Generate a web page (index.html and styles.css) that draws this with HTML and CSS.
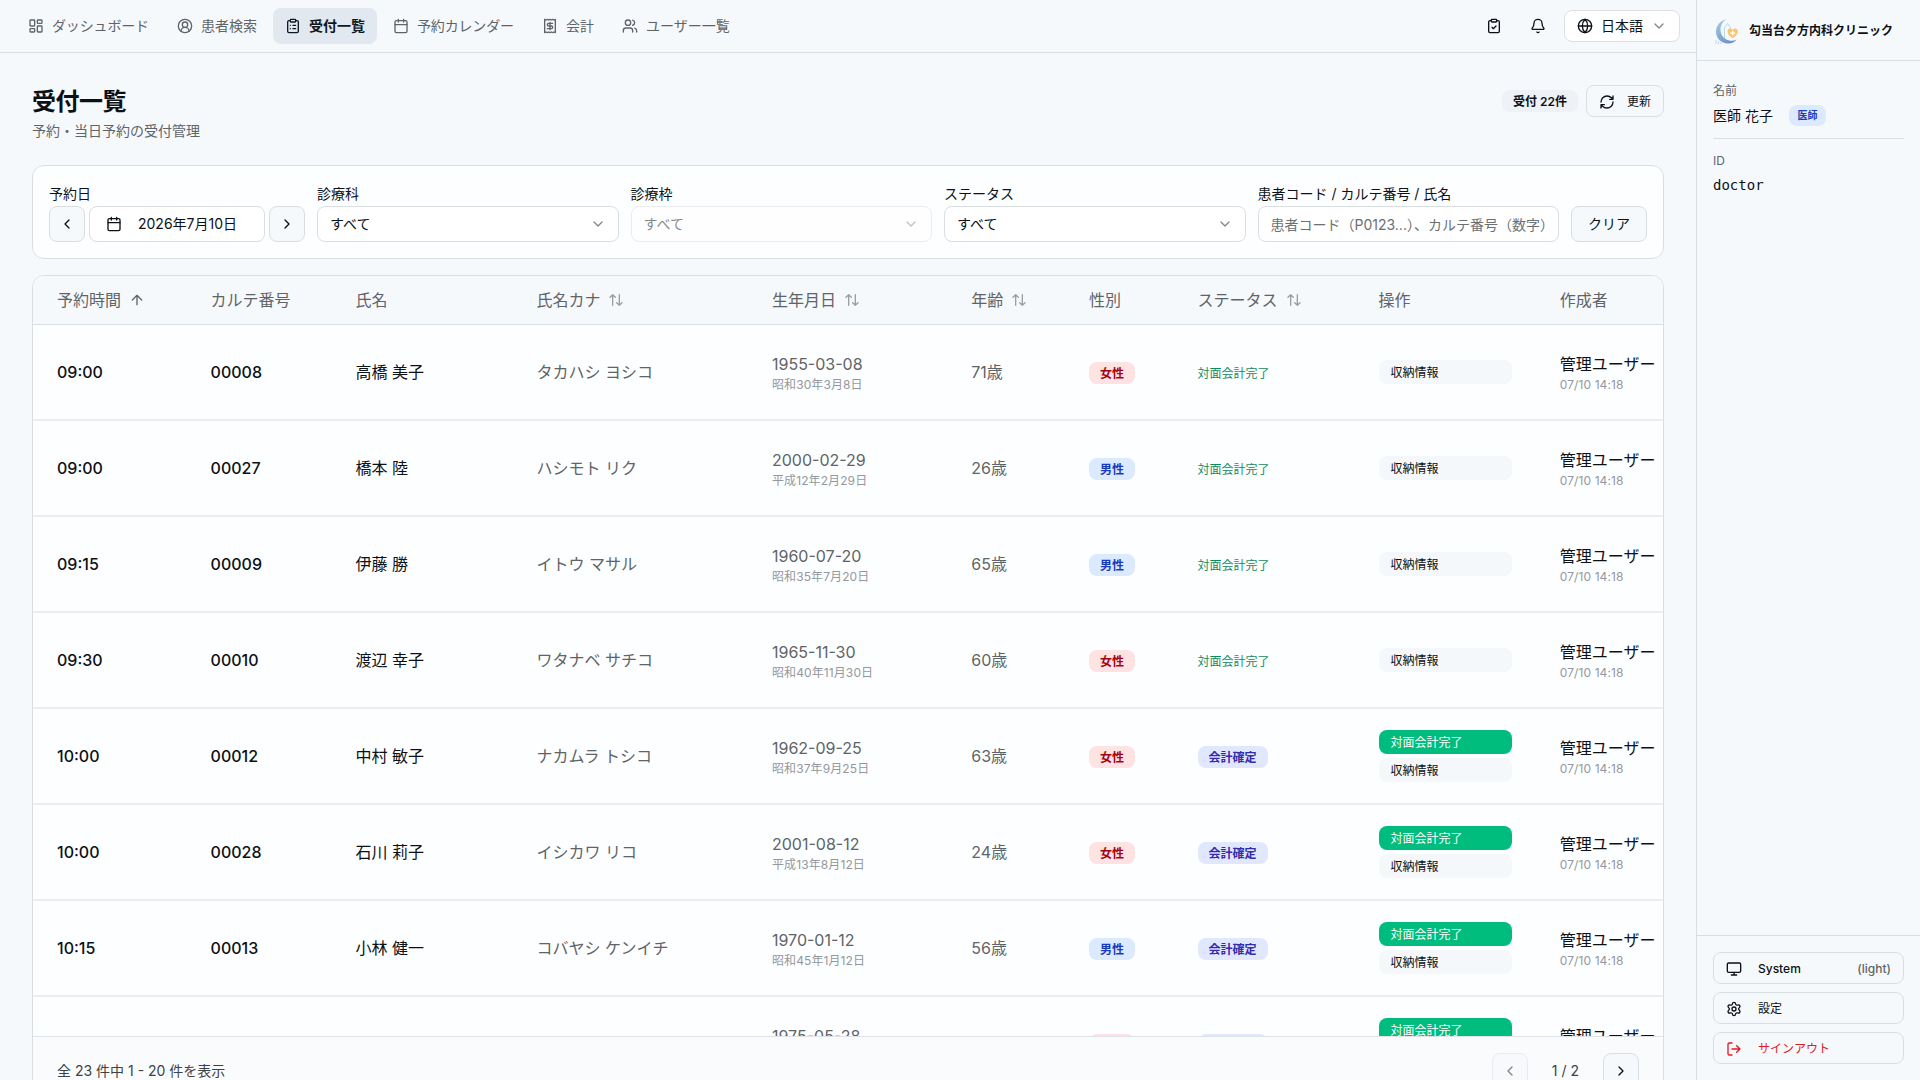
FILE: index.html
```html
<!DOCTYPE html>
<html lang="ja">
<head>
  <meta charset="UTF-8">
  <meta name="viewport" content="width=device-width, initial-scale=1">
  <title>受付一覧</title>
  <link rel="stylesheet" href="styles.css">
</head>
<body>

  <!-- Shared icons -->
  <svg class="icon-defs" width="0" height="0">
    <symbol id="i-dashboard" viewBox="0 0 24 24"><rect x="3" y="3" width="7" height="9" rx="1"/><rect x="14" y="3" width="7" height="5" rx="1"/><rect x="14" y="12" width="7" height="9" rx="1"/><rect x="3" y="16" width="7" height="5" rx="1"/></symbol>
    <symbol id="i-user" viewBox="0 0 24 24"><path d="M18 20a6 6 0 0 0-12 0"/><circle cx="12" cy="10" r="4"/><circle cx="12" cy="12" r="10"/></symbol>
    <symbol id="i-clipboard-list" viewBox="0 0 24 24"><rect x="8" y="2" width="8" height="4" rx="1"/><path d="M16 4h2a2 2 0 0 1 2 2v14a2 2 0 0 1-2 2H6a2 2 0 0 1-2-2V6a2 2 0 0 1 2-2h2M12 11h4M12 16h4M8 11h.01M8 16h.01"/></symbol>
    <symbol id="i-clipboard-check" viewBox="0 0 24 24"><rect x="8" y="2" width="8" height="4" rx="1"/><path d="M16 4h2a2 2 0 0 1 2 2v14a2 2 0 0 1-2 2H6a2 2 0 0 1-2-2V6a2 2 0 0 1 2-2h2M9 14l2 2 4-4"/></symbol>
    <symbol id="i-calendar" viewBox="0 0 24 24"><path d="M8 2v4M16 2v4M3 10h18"/><rect x="3" y="4" width="18" height="18" rx="2"/></symbol>
    <symbol id="i-receipt" viewBox="0 0 24 24"><path d="M4 2v20l2-1 2 1 2-1 2 1 2-1 2 1 2-1 2 1V2l-2 1-2-1-2 1-2-1-2 1-2-1-2 1Z"/><path d="M16 8h-6a2 2 0 1 0 0 4h4a2 2 0 1 1 0 4H8M12 17.5v-11"/></symbol>
    <symbol id="i-users" viewBox="0 0 24 24"><path d="M16 21v-2a4 4 0 0 0-4-4H6a4 4 0 0 0-4 4v2M22 21v-2a4 4 0 0 0-3-3.87M16 3.13a4 4 0 0 1 0 7.75"/><circle cx="9" cy="7" r="4"/></symbol>
    <symbol id="i-bell" viewBox="0 0 24 24"><path d="M10.27 21a2 2 0 0 0 3.46 0M3.26 15.33A1 1 0 0 0 4 17h16a1 1 0 0 0 .74-1.67C19.41 13.96 18 12.5 18 8A6 6 0 0 0 6 8c0 4.5-1.41 5.96-2.74 7.33"/></symbol>
    <symbol id="i-globe" viewBox="0 0 24 24"><circle cx="12" cy="12" r="10"/><path d="M12 2a14.5 14.5 0 0 0 0 20 14.5 14.5 0 0 0 0-20M2 12h20"/></symbol>
    <symbol id="i-down" viewBox="0 0 24 24"><path d="m6 9 6 6 6-6"/></symbol>
    <symbol id="i-left" viewBox="0 0 24 24"><path d="m15 18-6-6 6-6"/></symbol>
    <symbol id="i-right" viewBox="0 0 24 24"><path d="m9 18 6-6-6-6"/></symbol>
    <symbol id="i-refresh" viewBox="0 0 24 24"><path d="M3 12a9 9 0 0 1 9-9 9.75 9.75 0 0 1 6.74 2.74L21 8M21 3v5h-5M21 12a9 9 0 0 1-9 9 9.75 9.75 0 0 1-6.74-2.74L3 16M8 16H3v5"/></symbol>
    <symbol id="i-up" viewBox="0 0 24 24"><path d="m5 12 7-7 7 7M12 19V5"/></symbol>
    <symbol id="i-sort" viewBox="0 0 24 24"><path d="m21 16-4 4-4-4M17 20V4M3 8l4-4 4 4M7 4v16"/></symbol>
    <symbol id="i-monitor" viewBox="0 0 24 24"><rect x="2" y="3" width="20" height="14" rx="2"/><path d="M8 21h8M12 17v4"/></symbol>
    <symbol id="i-settings" viewBox="0 0 24 24"><path d="M9.671 4.136a2.34 2.34 0 0 1 4.659 0 2.34 2.34 0 0 0 3.319 1.915 2.34 2.34 0 0 1 2.33 4.033 2.34 2.34 0 0 0 0 3.831 2.34 2.34 0 0 1-2.33 4.033 2.34 2.34 0 0 0-3.319 1.915 2.34 2.34 0 0 1-4.659 0 2.34 2.34 0 0 0-3.32-1.915 2.34 2.34 0 0 1-2.33-4.033 2.34 2.34 0 0 0 0-3.831A2.34 2.34 0 0 1 6.35 6.051a2.34 2.34 0 0 0 3.319-1.915"/><circle cx="12" cy="12" r="3"/></symbol>
    <symbol id="i-logout" viewBox="0 0 24 24"><path d="M9 21H5a2 2 0 0 1-2-2V5a2 2 0 0 1 2-2h4M16 17l5-5-5-5M21 12H9"/></symbol>
  </svg>

  <div class="app">
    <div class="content">
      <header class="topbar">
        <nav class="nav">
          <a class="nav-item kana"><svg class="icon"><use href="#i-dashboard"/></svg>ダッシュボード</a>
          <a class="nav-item"><svg class="icon"><use href="#i-user"/></svg>患者検索</a>
          <a class="nav-item active"><svg class="icon"><use href="#i-clipboard-list"/></svg>受付一覧</a>
          <a class="nav-item kana"><svg class="icon"><use href="#i-calendar"/></svg>予約カレンダー</a>
          <a class="nav-item"><svg class="icon"><use href="#i-receipt"/></svg>会計</a>
          <a class="nav-item"><svg class="icon"><use href="#i-users"/></svg>ユーザー一覧</a>
        </nav>
        <div class="tools">
          <button class="icon-button"><svg class="icon"><use href="#i-clipboard-check"/></svg></button>
          <button class="icon-button"><svg class="icon"><use href="#i-bell"/></svg></button>
          <button class="language"><svg class="icon"><use href="#i-globe"/></svg><span>日本語</span><svg class="icon chevron"><use href="#i-down"/></svg></button>
        </div>
      </header>

      <main class="main">
        <div class="page-head">
          <div>
            <h1>受付一覧</h1>
            <p class="subtitle">予約・当日予約の受付管理</p>
          </div>
          <div class="page-actions">
            <span class="count">受付 22件</span>
            <button class="refresh"><svg class="icon"><use href="#i-refresh"/></svg>更新</button>
          </div>
        </div>

        <section class="filters">
          <div class="field field-date">
            <label>予約日</label>
            <div class="date-row">
              <button class="control square"><svg class="icon"><use href="#i-left"/></svg></button>
              <button class="control date"><svg class="icon"><use href="#i-calendar"/></svg>2026年7月10日</button>
              <button class="control square"><svg class="icon"><use href="#i-right"/></svg></button>
            </div>
          </div>
          <div class="field">
            <label>診療科</label>
            <div class="control select"><span>すべて</span><svg class="icon chevron"><use href="#i-down"/></svg></div>
          </div>
          <div class="field">
            <label>診療枠</label>
            <div class="control select disabled"><span>すべて</span><svg class="icon chevron"><use href="#i-down"/></svg></div>
          </div>
          <div class="field">
            <label>ステータス</label>
            <div class="control select"><span>すべて</span><svg class="icon chevron"><use href="#i-down"/></svg></div>
          </div>
          <div class="field">
            <label>患者コード / カルテ番号 / 氏名</label>
            <input class="control search" type="text" placeholder="患者コード（P0123...）、カルテ番号（数字）">
          </div>
          <button class="control clear">クリア</button>
        </section>

        <section class="list">
          <div class="table-wrap">
            <table>
              <colgroup>
                <col class="c-time"><col class="c-chart"><col class="c-name"><col class="c-kana"><col class="c-birth">
                <col class="c-age"><col class="c-sex"><col class="c-status"><col class="c-action"><col class="c-author">
              </colgroup>
              <thead>
                <tr>
                  <th><span class="th">予約時間<svg class="icon"><use href="#i-up"/></svg></span></th>
                  <th>カルテ番号</th>
                  <th>氏名</th>
                  <th><span class="th">氏名カナ<svg class="icon sort"><use href="#i-sort"/></svg></span></th>
                  <th><span class="th">生年月日<svg class="icon sort"><use href="#i-sort"/></svg></span></th>
                  <th><span class="th">年齢<svg class="icon sort"><use href="#i-sort"/></svg></span></th>
                  <th>性別</th>
                  <th><span class="th">ステータス<svg class="icon sort"><use href="#i-sort"/></svg></span></th>
                  <th>操作</th>
                  <th>作成者</th>
                </tr>
              </thead>
              <tbody>
                <tr>
                  <td class="strong">09:00</td>
                  <td class="strong">00008</td>
                  <td class="name">高橋 美子</td>
                  <td>タカハシ ヨシコ</td>
                  <td>1955-03-08<small>昭和30年3月8日</small></td>
                  <td>71歳</td>
                  <td><span class="badge female">女性</span></td>
                  <td><span class="done">対面会計完了</span></td>
                  <td><div class="actions"><button>収納情報</button></div></td>
                  <td class="author">管理ユーザー<small>07/10 14:18</small></td>
                </tr>
                <tr>
                  <td class="strong">09:00</td>
                  <td class="strong">00027</td>
                  <td class="name">橋本 陸</td>
                  <td>ハシモト リク</td>
                  <td>2000-02-29<small>平成12年2月29日</small></td>
                  <td>26歳</td>
                  <td><span class="badge male">男性</span></td>
                  <td><span class="done">対面会計完了</span></td>
                  <td><div class="actions"><button>収納情報</button></div></td>
                  <td class="author">管理ユーザー<small>07/10 14:18</small></td>
                </tr>
                <tr>
                  <td class="strong">09:15</td>
                  <td class="strong">00009</td>
                  <td class="name">伊藤 勝</td>
                  <td>イトウ マサル</td>
                  <td>1960-07-20<small>昭和35年7月20日</small></td>
                  <td>65歳</td>
                  <td><span class="badge male">男性</span></td>
                  <td><span class="done">対面会計完了</span></td>
                  <td><div class="actions"><button>収納情報</button></div></td>
                  <td class="author">管理ユーザー<small>07/10 14:18</small></td>
                </tr>
                <tr>
                  <td class="strong">09:30</td>
                  <td class="strong">00010</td>
                  <td class="name">渡辺 幸子</td>
                  <td>ワタナベ サチコ</td>
                  <td>1965-11-30<small>昭和40年11月30日</small></td>
                  <td>60歳</td>
                  <td><span class="badge female">女性</span></td>
                  <td><span class="done">対面会計完了</span></td>
                  <td><div class="actions"><button>収納情報</button></div></td>
                  <td class="author">管理ユーザー<small>07/10 14:18</small></td>
                </tr>
                <tr>
                  <td class="strong">10:00</td>
                  <td class="strong">00012</td>
                  <td class="name">中村 敏子</td>
                  <td>ナカムラ トシコ</td>
                  <td>1962-09-25<small>昭和37年9月25日</small></td>
                  <td>63歳</td>
                  <td><span class="badge female">女性</span></td>
                  <td><span class="badge fixed">会計確定</span></td>
                  <td><div class="actions"><button class="primary">対面会計完了</button><button>収納情報</button></div></td>
                  <td class="author">管理ユーザー<small>07/10 14:18</small></td>
                </tr>
                <tr>
                  <td class="strong">10:00</td>
                  <td class="strong">00028</td>
                  <td class="name">石川 莉子</td>
                  <td>イシカワ リコ</td>
                  <td>2001-08-12<small>平成13年8月12日</small></td>
                  <td>24歳</td>
                  <td><span class="badge female">女性</span></td>
                  <td><span class="badge fixed">会計確定</span></td>
                  <td><div class="actions"><button class="primary">対面会計完了</button><button>収納情報</button></div></td>
                  <td class="author">管理ユーザー<small>07/10 14:18</small></td>
                </tr>
                <tr>
                  <td class="strong">10:15</td>
                  <td class="strong">00013</td>
                  <td class="name">小林 健一</td>
                  <td>コバヤシ ケンイチ</td>
                  <td>1970-01-12<small>昭和45年1月12日</small></td>
                  <td>56歳</td>
                  <td><span class="badge male">男性</span></td>
                  <td><span class="badge fixed">会計確定</span></td>
                  <td><div class="actions"><button class="primary">対面会計完了</button><button>収納情報</button></div></td>
                  <td class="author">管理ユーザー<small>07/10 14:18</small></td>
                </tr>
                <tr>
                  <td></td>
                  <td></td>
                  <td></td>
                  <td></td>
                  <td>1975-05-28<small>昭和50年5月28日</small></td>
                  <td></td>
                  <td><span class="badge female">女性</span></td>
                  <td><span class="badge fixed">会計確定</span></td>
                  <td><div class="actions"><button class="primary">対面会計完了</button><button>収納情報</button></div></td>
                  <td class="author">管理ユーザー<small>07/10 14:18</small></td>
                </tr>
              </tbody>
            </table>
          </div>
          <footer class="pager">
            <span>全 23 件中 1 - 20 件を表示</span>
            <div class="pager-nav">
              <button class="control square disabled"><svg class="icon"><use href="#i-left"/></svg></button>
              <span>1 / 2</span>
              <button class="control square"><svg class="icon"><use href="#i-right"/></svg></button>
            </div>
          </footer>
        </section>
      </main>
    </div>

    <aside class="sidebar">
      <div class="clinic">
        <svg class="logo" viewBox="0 0 28 28">
          <defs>
            <linearGradient id="moon" x1="0" y1="0" x2="0.6" y2="1">
              <stop offset="0" stop-color="#a9cdea"/>
              <stop offset="1" stop-color="#6d93cb"/>
            </linearGradient>
          </defs>
          <path class="logo-house" d="M11.5 23V10.5L14.5 6.5l3 4V14M3 23v4M5.5 24.5V27M8 25v2"/>
          <path fill="url(#moon)" d="M14 2C7.5 3.5 3 8.5 3 14.5 3 21.5 8.5 26.5 15 26.5c4 0 7-1.500 8.500-4-2 1.200-4 1.500-6 1.200C11.500 23 7.500 18.500 7.500 12.500 7.500 8 10 4 14 2Z"/>
          <path class="logo-heart" d="M19.700 21.200c-3.500-2.500-5.200-4.500-5.200-6.700 0-3.300 3.900-3.900 5.200-1.400 1.300-2.500 5.200-1.900 5.200 1.400 0 2.200-1.700 4.200-5.200 6.700Z"/>
          <path class="logo-cross" d="M19.700 13.800v4.800M17.300 16.200h4.800"/>
        </svg>
        <span>勾当台夕方内科クリニック</span>
      </div>
      <div class="profile">
        <div class="profile-name">
          <div class="caption">名前</div>
          <div class="person"><span>医師 花子</span><span class="role">医師</span></div>
        </div>
        <div class="profile-id">
          <div class="caption">ID</div>
          <div class="login">doctor</div>
        </div>
      </div>
      <div class="side-buttons">
        <button class="theme"><svg class="icon"><use href="#i-monitor"/></svg>System<span class="mode">(light)</span></button>
        <button><svg class="icon"><use href="#i-settings"/></svg>設定</button>
        <button class="signout"><svg class="icon"><use href="#i-logout"/></svg>サインアウト</button>
      </div>
    </aside>
  </div>

</body>
</html>
```
FILE: styles.css
```css
* {
  box-sizing: border-box;
}

body {
  margin: 0;
  font-family: Inter, "Noto Sans CJK JP", sans-serif;
  font-size: 14px;
  line-height: 20px;
  color: #0c1116;
  background: #f6f9fc;
  height: 100vh;
  overflow: hidden;
}

button,
input {
  font: inherit;
  color: inherit;
  margin: 0;
}

button {
  background: none;
  border: none;
  padding: 0;
  white-space: nowrap;
}

.icon-defs {
  display: none;
}

.icon {
  width: 16px;
  height: 16px;
  flex: none;
  fill: none;
  stroke: currentColor;
  stroke-width: 2;
  stroke-linecap: round;
  stroke-linejoin: round;
}

.chevron {
  opacity: 0.5;
}

.app {
  display: flex;
  height: 100vh;
}

.content {
  flex: 1;
  min-width: 0;
  display: flex;
  flex-direction: column;
}

/* Top bar */
.topbar {
  flex: none;
  height: 53px;
  padding: 0 16px;
  border-bottom: 1px solid #d9dee3;
  display: flex;
  align-items: center;
  justify-content: space-between;
}

.nav {
  display: flex;
  gap: 4px;
}

.nav-item {
  display: flex;
  align-items: center;
  gap: 8px;
  height: 36px;
  padding: 0 12px;
  border-radius: 8px;
  color: #5f6468;
}

.nav-item.kana {
  letter-spacing: -0.15px;
}

.nav-item.active {
  background: #e2e8f0;
  color: #0f1720;
  font-weight: 600;
}

.tools {
  display: flex;
  align-items: center;
  gap: 8px;
}

.icon-button {
  width: 36px;
  height: 36px;
  display: flex;
  align-items: center;
  justify-content: center;
}

.language {
  display: flex;
  align-items: center;
  gap: 8px;
  width: 116px;
  height: 32px;
  padding: 0 12px;
  border: 1px solid #dce0e4;
  border-radius: 8px;
  background: #fff;
}

.language .chevron {
  margin-left: auto;
}

/* Page heading */
.main {
  flex: 1;
  padding: 32px 32px 0;
}

.page-head {
  display: flex;
  justify-content: space-between;
  height: 80px;
}

h1 {
  margin: 0;
  padding-top: 1px;
  font-size: 24px;
  line-height: 32px;
  font-weight: 700;
  letter-spacing: -0.5px;
}

.subtitle {
  margin: 3px 0 0;
  color: #5f6468;
}

.page-actions {
  display: flex;
  align-items: center;
  gap: 8px;
  height: 32px;
}

.count {
  height: 22px;
  padding: 1px 11px 0;
  border-radius: 8px;
  background: #eef2f6;
  font-size: 12px;
  line-height: 21px;
  font-weight: 600;
}

.refresh {
  display: flex;
  align-items: center;
  gap: 12px;
  width: 78px;
  height: 32px;
  padding: 1px 12px 0;
  border: 1px solid #d9dee3;
  border-radius: 8px;
  font-size: 12px;
}

/* Filters */
.filters {
  display: flex;
  align-items: flex-end;
  gap: 12px;
  height: 94px;
  padding: 16px;
  border: 1px solid #d9dee3;
  border-radius: 12px;
  background: #fdfeff;
}

.field {
  flex: 1 1 0;
  min-width: 0;
}

.field-date {
  flex: none;
}

.field label {
  display: block;
  line-height: 24px;
}

.date-row {
  display: flex;
  gap: 4px;
}

.control {
  display: flex;
  align-items: center;
  height: 36px;
  border: 1px solid #d9dee3;
  border-radius: 8px;
  background: #fff;
}

.square {
  justify-content: center;
  width: 36px;
  background: #f6f9fc;
}

.date {
  width: 176px;
  padding-left: 16px;
  gap: 16px;
}

.select {
  justify-content: space-between;
  padding: 0 12px;
}

.disabled {
  opacity: 0.5;
}

.search {
  width: 100%;
  padding: 0 12px;
}

.search::placeholder {
  color: #6b7075;
  opacity: 1;
}

.clear {
  justify-content: center;
  width: 76px;
  background: #f6f9fc;
}

/* Reception table */
.list {
  margin-top: 16px;
  border: 1px solid #d9dee3;
  border-radius: 12px;
  background: #fdfeff;
  overflow: hidden;
}

.table-wrap {
  height: 760px;
  overflow: hidden;
}

table {
  width: 1683px;
  table-layout: fixed;
  border-collapse: separate;
  border-spacing: 0;
  font-size: 16px;
  line-height: 24px;
}

.c-time { width: 153.600px; }
.c-chart { width: 144.800px; }
.c-name { width: 181px; }
.c-kana { width: 235.600px; }
.c-birth { width: 199.300px; }
.c-age { width: 117.700px; }
.c-sex { width: 108.600px; }
.c-status { width: 181px; }
.c-action { width: 181.200px; }

th {
  height: 49px;
  padding: 0 0 0 24px;
  border-bottom: 1px solid #d9dee3;
  background: #f6f9fc;
  color: #5f6468;
  font-weight: 400;
  text-align: left;
  white-space: nowrap;
}

.th {
  display: flex;
  align-items: center;
  gap: 8px;
}

.sort {
  opacity: 0.6;
}

td {
  height: 96px;
  padding: 0 24px;
  border-bottom: 2px solid #ebedf0;
  color: #5f6468;
  white-space: nowrap;
}

td small {
  display: block;
  padding-top: 1px;
  font-size: 12px;
  line-height: 15px;
  letter-spacing: 0.1px;
  color: #94989c;
}

.strong {
  color: #0c1116;
  font-weight: 500;
}

.name,
.author {
  color: #0c1116;
}

.badge {
  display: inline-block;
  height: 22px;
  padding: 1px 11px 0;
  border-radius: 8px;
  font-size: 12px;
  line-height: 21px;
  font-weight: 600;
  vertical-align: middle;
}

.female {
  background: #ffe2e2;
  color: #9f0712;
}

.male {
  background: #dbeafe;
  color: #193cb8;
}

.fixed {
  background: #e0e7ff;
  color: #372aac;
}

.done {
  display: block;
  padding-top: 3px;
  font-size: 12px;
  color: #138a5e;
}

.actions {
  display: flex;
  flex-direction: column;
  gap: 4px;
}

.actions button {
  height: 24px;
  padding: 1px 12px 0;
  border-radius: 8px;
  background: #f5f8fa;
  color: #0c1116;
  font-size: 12px;
  line-height: 23px;
  text-align: left;
}

.actions .primary {
  background: #00bc7d;
  color: #fff;
}

.pager {
  display: flex;
  align-items: center;
  justify-content: space-between;
  height: 69px;
  padding: 0 24px;
  border-top: 1px solid #dfe2e6;
  background: #fafbfd;
  color: #3d4247;
}

.pager-nav {
  display: flex;
  align-items: center;
  gap: 24px;
}

.pager .square {
  color: #0c1116;
}

/* Sidebar */
.sidebar {
  flex: none;
  width: 224px;
  display: flex;
  flex-direction: column;
  border-left: 1px solid #d9dee3;
}

.clinic {
  display: flex;
  align-items: center;
  gap: 8px;
  height: 61px;
  padding: 1px 16px 0;
  border-bottom: 1px solid #d9dee3;
  font-size: 12px;
  font-weight: 600;
  white-space: nowrap;
}

.logo {
  width: 28px;
  height: 28px;
  flex: none;
}

.logo-house {
  fill: none;
  stroke: #b9d2e8;
  stroke-width: 0.9;
}

.logo-heart {
  fill: #f9c370;
}

.logo-cross {
  stroke: #fff;
  stroke-width: 1.5;
}

.profile {
  flex: 1;
  padding: 21px 16px 0;
}

.caption {
  font-size: 12px;
  line-height: 18px;
  color: #5f6468;
}

.profile-name {
  height: 57px;
  border-bottom: 1px solid #d9dee3;
}

.person {
  display: flex;
  align-items: center;
  gap: 16px;
  height: 31px;
}

.role {
  height: 21px;
  padding: 0 8.500px;
  border-radius: 8px;
  background: #dbeafe;
  color: #193cb8;
  font-size: 10px;
  line-height: 21px;
  font-weight: 600;
}

.profile-id {
  padding-top: 13px;
}

.login {
  margin-top: 5px;
  font-family: "DejaVu Sans Mono", monospace;
}

.side-buttons {
  display: flex;
  flex-direction: column;
  gap: 8px;
  padding: 16px;
  border-top: 1px solid #d9dee3;
}

.side-buttons button {
  display: flex;
  align-items: center;
  gap: 16px;
  height: 32px;
  padding: 1px 12px 0;
  border: 1px solid #d9dee3;
  border-radius: 8px;
  font-size: 12px;
}

.side-buttons .theme {
  font-weight: 500;
}

.mode {
  margin-left: auto;
  color: #5f6468;
}

.side-buttons .signout {
  color: #e01b24;
}
```
